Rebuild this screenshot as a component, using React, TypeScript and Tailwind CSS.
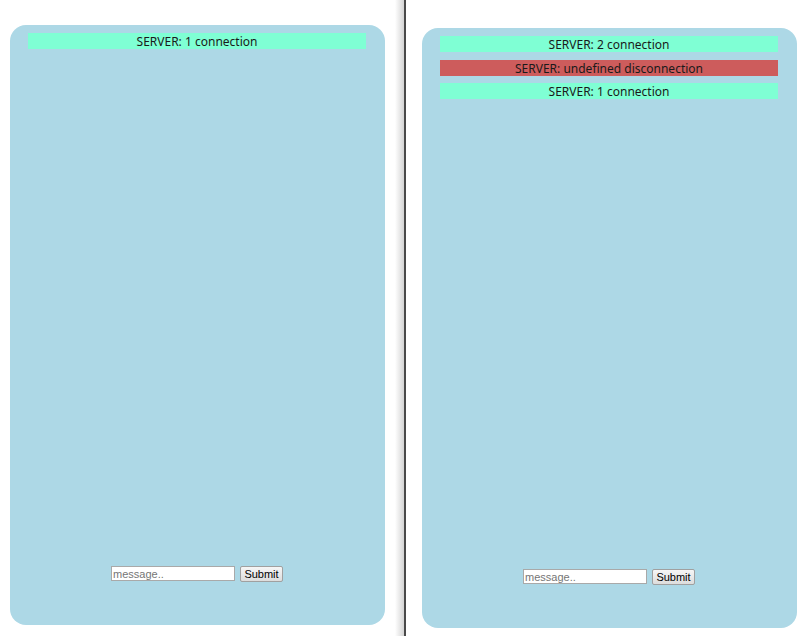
const left = [{ text: "SERVER: 1 connection", kind: "on" }];
const right = [
  { text: "SERVER: 2 connection", kind: "on" },
  { text: "SERVER: undefined disconnection", kind: "off" },
  { text: "SERVER: 1 connection", kind: "on" },
];

type Msg = { text: string; kind: string };

function ChatBox({ messages }: { messages: Msg[] }) {
  return (
    <div className="flex h-[600px] w-[375px] flex-col rounded-[16px] bg-[#add8e6] pl-[18px] pr-[19px] pt-[8px] pb-[43px]">
      <ul className="flex flex-1 flex-col gap-[7.5px]">
        {messages.map((m, i) => (
          <li
            key={i}
            className={
              "h-[16px] text-center text-[12px] leading-[17px] text-[#1a1a1a] " +
              (m.kind === "on" ? "bg-[#7fffd4]" : "bg-[#cd5c5c]")
            }
          >
            {m.text}
          </li>
        ))}
      </ul>
      <form className="flex items-start justify-center gap-[5px]" onSubmit={(e) => e.preventDefault()}>
        <input
          placeholder="message.."
          className="h-[15px] w-[124px] border border-[#a9a9a9] bg-white px-[1px] font-['Liberation_Sans',sans-serif] text-[11px] leading-[13px] text-black outline-none placeholder:text-[#757575]"
        />
        <button
          type="submit"
          className="h-[16px] w-[43px] rounded-[2px] border border-[#a0a0a0] bg-gradient-to-b from-[#f6f6f6] to-[#dddddd] font-['Liberation_Sans',sans-serif] text-[11px] leading-[13px] text-black"
        >
          Submit
        </button>
      </form>
    </div>
  );
}

export default function App() {
  return (
    <div className="flex h-[636px] w-[808px] overflow-hidden bg-white font-['Noto_Sans',sans-serif]">
      <div className="w-[395px] shrink-0 pl-[10px] pt-[25px]">
        <ChatBox messages={left} />
      </div>
      <div className="w-[9px] shrink-0 bg-gradient-to-r from-white to-[#d4d4d4]" />
      <div className="w-[2px] shrink-0 bg-[#4a4a4a]" />
      <div className="pl-[16px] pt-[28px]">
        <ChatBox messages={right} />
      </div>
    </div>
  );
}
